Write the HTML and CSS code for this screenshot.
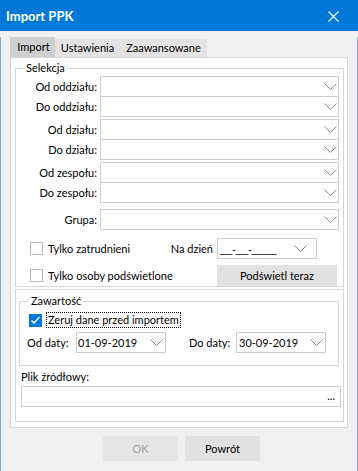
FILE: index.html
```html
<!DOCTYPE html>
<html lang="pl">
<head>
<meta charset="utf-8">
<title>Import PPK</title>
<link rel="stylesheet" href="styles.css">
</head>
<body>
<div class="window">
  <div class="titlebar">
    <span class="title">Import PPK</span>
    <svg class="close" width="11" height="11" viewBox="0 0 11 11"><path d="M0.5 0.5L10.5 10.5M10.5 0.5L0.5 10.5" stroke="#fff" stroke-width="1.1" fill="none"/></svg>
  </div>
  <div class="client">
    <div class="tabs">
      <div class="tab tab-active">Import</div>
      <div class="tab tab-ust">Ustawienia</div>
      <div class="tab tab-zaa">Zaawansowane</div>
    </div>
    <div class="panel">
      <fieldset class="group group-sel">
        <legend class="legend legend-sel">Selekcja</legend>
        <div class="field"><span class="lbl">Od oddziału:</span><div class="combo"><svg class="chev" width="13" height="7" viewBox="0 0 13 7"><polyline points="0.5,0.5 6.5,6.5 12.5,0.5" fill="none" stroke="#8a8a8a" stroke-width="1"/></svg></div></div>
        <div class="field field-second"><span class="lbl">Do oddziału:</span><div class="combo"><svg class="chev" width="13" height="7" viewBox="0 0 13 7"><polyline points="0.5,0.5 6.5,6.5 12.5,0.5" fill="none" stroke="#8a8a8a" stroke-width="1"/></svg></div></div>
        <div class="field field-pair"><span class="lbl">Od działu:</span><div class="combo"><svg class="chev" width="13" height="7" viewBox="0 0 13 7"><polyline points="0.5,0.5 6.5,6.5 12.5,0.5" fill="none" stroke="#8a8a8a" stroke-width="1"/></svg></div></div>
        <div class="field field-second"><span class="lbl">Do działu:</span><div class="combo"><svg class="chev" width="13" height="7" viewBox="0 0 13 7"><polyline points="0.5,0.5 6.5,6.5 12.5,0.5" fill="none" stroke="#8a8a8a" stroke-width="1"/></svg></div></div>
        <div class="field field-pair"><span class="lbl">Od zespołu:</span><div class="combo"><svg class="chev" width="13" height="7" viewBox="0 0 13 7"><polyline points="0.5,0.5 6.5,6.5 12.5,0.5" fill="none" stroke="#8a8a8a" stroke-width="1"/></svg></div></div>
        <div class="field field-second"><span class="lbl">Do zespołu:</span><div class="combo"><svg class="chev" width="13" height="7" viewBox="0 0 13 7"><polyline points="0.5,0.5 6.5,6.5 12.5,0.5" fill="none" stroke="#8a8a8a" stroke-width="1"/></svg></div></div>
        <div class="field field-grupa"><span class="lbl">Grupa:</span><div class="combo"><svg class="chev" width="13" height="7" viewBox="0 0 13 7"><polyline points="0.5,0.5 6.5,6.5 12.5,0.5" fill="none" stroke="#8a8a8a" stroke-width="1"/></svg></div></div>
        <div class="checkrow checkrow-1">
          <span class="cb"></span><span class="cb-text">Tylko zatrudnieni</span>
          <span class="na-dzien">Na dzień</span>
          <div class="date date-na"><span class="date-text date-empty">__-__-____</span><svg class="chev" width="13" height="7" viewBox="0 0 13 7"><polyline points="0.5,0.5 6.5,6.5 12.5,0.5" fill="none" stroke="#8a8a8a" stroke-width="1"/></svg></div>
        </div>
        <div class="checkrow checkrow-2">
          <span class="cb"></span><span class="cb-text">Tylko osoby podświetlone</span>
          <div class="btn btn-podswietl">Podświetl teraz</div>
        </div>
      </fieldset>
      <div class="srcbox">
        <fieldset class="group group-zaw">
          <legend class="legend legend-zaw">Zawartość</legend>
          <div class="zrow">
            <span class="cb cb-checked"><svg width="13" height="13" viewBox="0 0 13 13"><polyline points="2.5,6.5 5,9 10.5,3" fill="none" stroke="#fff" stroke-width="1.3"/></svg></span>
            <span class="focus">Zeruj dane przed importem</span>
          </div>
          <div class="drow">
            <span class="dlbl dlbl-od">Od daty:</span>
            <div class="date date-od"><span class="date-text">01-09-2019</span><svg class="chev" width="13" height="7" viewBox="0 0 13 7"><polyline points="0.5,0.5 6.5,6.5 12.5,0.5" fill="none" stroke="#8a8a8a" stroke-width="1"/></svg></div>
            <span class="dlbl dlbl-do">Do daty:</span>
            <div class="date date-do"><span class="date-text">30-09-2019</span><svg class="chev" width="13" height="7" viewBox="0 0 13 7"><polyline points="0.5,0.5 6.5,6.5 12.5,0.5" fill="none" stroke="#8a8a8a" stroke-width="1"/></svg></div>
          </div>
        </fieldset>
        <div class="plik-lbl">Plik źródłowy:</div>
        <div class="plik"><span class="dots">...</span></div>
      </div>
    </div>
    <div class="footer">
      <div class="btn btn-foot btn-disabled">OK</div>
      <div class="btn btn-foot">Powrót</div>
    </div>
  </div>
</div>
</body>
</html>
```

FILE: styles.css
```css
* { box-sizing: border-box; }
html, body { margin: 0; padding: 0; background: #f0f0f0; }
body { font-family: Lato, "Liberation Sans", sans-serif; font-size: 11px; color: #000; }

.window { width: 358px; height: 471px; background: #f0f0f0; }

.titlebar {
  height: 31px; background: #0078d7; color: #fff;
  display: flex; align-items: center; padding: 0 19px 0 6px;
}
.title { flex: 1; font-weight: bold; font-size: 13px; }
.close { display: block; margin-top: 2px; }

.client {
  height: 440px; border: 1px solid #84a8dc; border-top: 0;
  background: #f0f0f0;
}

.tabs { display: flex; align-items: flex-end; height: 20px; margin-top: 6px; padding-left: 9px; }
.tab { height: 18px; line-height: 18px; background: #e3e3e3; text-align: center; padding-left: 2px; }
.tab-active { height: 20px; line-height: 20px; width: 45px; background: #cfcfcf; }
.tab-ust { width: 63px; }
.tab-zaa { width: 89px; }

.panel {
  margin-left: 9px; width: 338px; height: 371px;
  border: 1px solid #d5d5d5; background: #fff;
  padding: 3px 0 0 4px;
}

.group { margin: 0; border: 1px solid #d5d5d5; min-width: 0; }
.legend { padding: 0 2px; line-height: 14px; font-size: 11px; }
.group-sel { width: 329px; padding: 1px 0 0 0; }
.legend-sel { margin-left: 8px; }

.field { display: flex; align-items: center; height: 21px; }
.field-second { margin-top: -1px; }
.field-pair { margin-top: 2px; }
.field-grupa { margin-top: 6px; }
.lbl { width: 81px; text-align: right; margin-right: 3px; }
.combo {
  width: 239px; height: 21px; border: 1px solid #cccccc; background: #fff;
  display: flex; align-items: center; justify-content: flex-end; padding-right: 1px;
}
.chev { display: block; }

.checkrow { display: flex; align-items: center; height: 21px; padding-left: 14px; }
.checkrow-1 { margin-top: 8px; }
.checkrow-2 { margin-top: 6px; }
.cb { width: 13px; height: 13px; border: 1px solid #b5b5b5; background: #fff; flex: none; }
.cb-text { margin-left: 5px; }
.na-dzien { margin-left: auto; margin-right: 4px; }
.date {
  height: 21px; border: 1px solid #cccccc; background: #fff;
  display: flex; align-items: center; justify-content: space-between;
}
.date-na { width: 100px; margin-right: 26px; padding: 0 9px 0 2px; }
.date-text { white-space: nowrap; }
.date-empty { font-family: "Liberation Sans", sans-serif; font-size: 11px; }

.btn {
  background: #e1e1e1; display: flex; align-items: center; justify-content: center;
}
.btn-podswietl { width: 120px; height: 21px; margin-left: auto; margin-right: 6px; }

.srcbox {
  margin-top: 2px; width: 329px; border: 1px solid #d5d5d5;
  padding: 4px 0 14px 0;
}
.group-zaw { margin: 0 4px 0 3px; padding: 4px 0 12px 0; }
.legend-zaw { margin-left: 9px; }
.zrow { display: flex; align-items: center; height: 16px; padding-left: 9px; }
.cb-checked { background: #0078d7; border: 0; }
.cb-checked svg { display: block; }
.focus { margin-left: 4px; height: 16px; line-height: 14px; border: 1px dotted #000; padding: 0 1px; white-space: nowrap; }
.drow { display: flex; align-items: center; height: 21px; margin-top: 4px; padding-left: 7px; }
.dlbl { white-space: nowrap; }
.dlbl-od { width: 49px; }
.dlbl-do { width: 47px; margin-left: 23px; }
.date-od { width: 90px; padding: 0 2px 0 1px; }
.date-do { width: 90px; padding: 0 2px 0 2px; }

.plik-lbl { margin: 4px 0 0 5px; line-height: 14px; }
.plik {
  margin: 2px 0 0 5px; width: 320px; height: 21px; border: 1px solid #cccccc; background: #fff;
  display: flex; align-items: center; justify-content: flex-end; padding: 0 5px 2px 0;
}
.dots { line-height: 14px; }

.footer { display: flex; gap: 7px; margin-top: 8px; padding-left: 102px; }
.btn-foot { width: 75px; height: 25px; }
.btn-disabled { color: #a0a0a0; background: #e5e5e5; }
```
